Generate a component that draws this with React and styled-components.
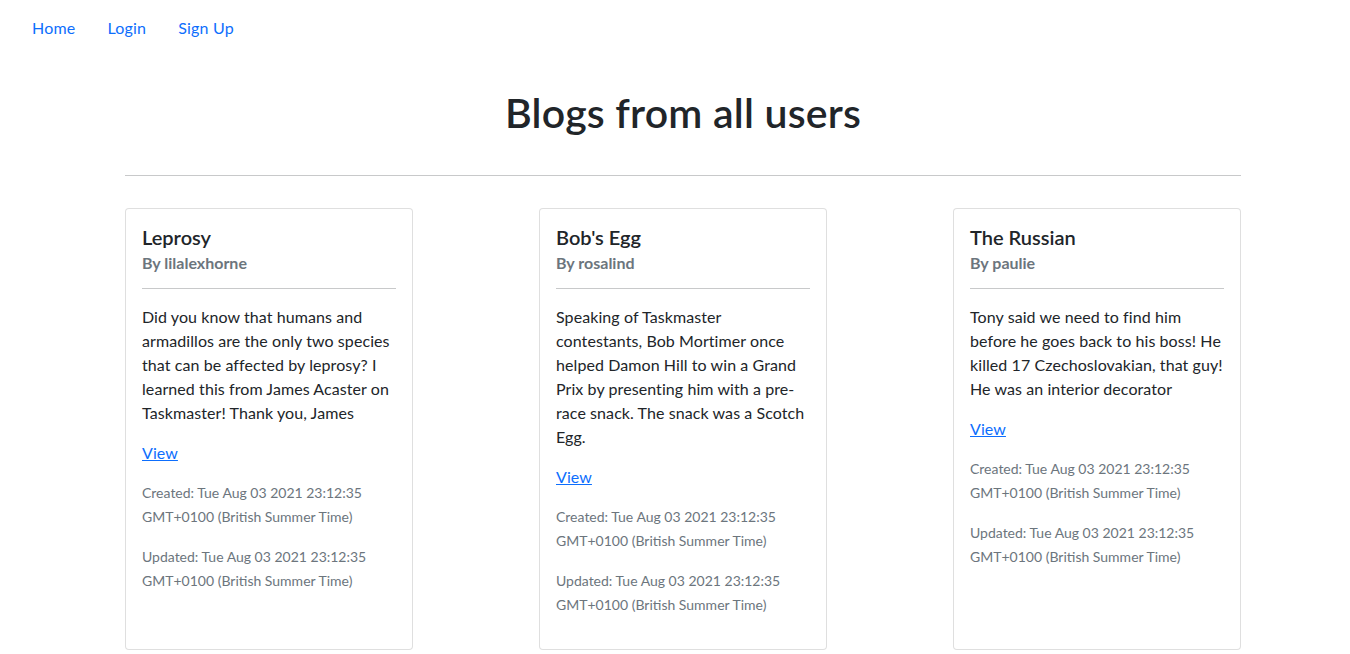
import React from "react";
import styled, { createGlobalStyle } from "styled-components";

const Global = createGlobalStyle`
  * { box-sizing: border-box; }
  body {
    margin: 0;
    font-family: Lato, "Noto Sans", sans-serif;
    font-size: 16px;
    line-height: 1.5;
    color: #212529;
    background: #fff;
  }
`;

const Nav = styled.nav`
  display: flex;
  padding: 8px 16px;
`;

const NavLink = styled.a`
  display: block;
  padding: 8px 16px;
  color: #0d6efd;
  text-decoration: none;
  font-size: 16px;
  line-height: 24px;
  letter-spacing: 0.2px;
  cursor: pointer;
`;

const Page = styled.div`
  padding-left: 16px;
`;

const Container = styled.main`
  width: 1140px;
  margin: 0 auto;
  padding: 0 12px;
`;

const Heading = styled.h1`
  margin: 33px 0 0;
  text-align: center;
  font-size: 41px;
  font-weight: 600;
  line-height: 48px;
  letter-spacing: 0.2px;
`;

const Rule = styled.hr`
  margin: ${(p) => p.$m || "16px 0"};
  border: 0;
  border-top: 1px solid #c8c9ca;
`;

const Grid = styled.div`
  display: flex;
  justify-content: space-between;
  align-items: stretch;
  margin-top: 32px;
`;

const Card = styled.article`
  width: 288px;
  border: 1px solid rgba(0, 0, 0, 0.125);
  border-radius: 4px;
  padding: 16px;
  background: #fff;
`;

const Title = styled.h5`
  margin: 0 0 8px;
  font-size: 20px;
  font-weight: 600;
  line-height: 24px;
`;

const Subtitle = styled.h6`
  margin: -4px 0 0;
  font-size: 16px;
  font-weight: 700;
  line-height: 19.2px;
  color: #6c757d;
`;

const Text = styled.p`
  margin: 0 0 16px;
  line-height: 24px;
  letter-spacing: 0.08px;
`;

const ViewLink = styled.a`
  color: #0d6efd;
  text-decoration: underline;
  cursor: pointer;
`;

const Meta = styled.p`
  margin: 0 0 16px;
  font-size: 14px;
  line-height: 24px;
  color: #6c757d;
`;

const date = "Tue Aug 03 2021 23:12:35 GMT+0100 (British Summer Time)";

const blogs = [
  {
    title: "Leprosy",
    author: "lilalexhorne",
    body: "Did you know that humans and armadillos are the only two species that can be affected by leprosy? I learned this from James Acaster on Taskmaster! Thank you, James",
  },
  {
    title: "Bob's Egg",
    author: "rosalind",
    body: "Speaking of Taskmaster contestants, Bob Mortimer once helped Damon Hill to win a Grand Prix by presenting him with a pre-race snack. The snack was a Scotch Egg.",
  },
  {
    title: "The Russian",
    author: "paulie",
    body: "Tony said we need to find him before he goes back to his boss! He killed 17 Czechoslovakian, that guy! He was an interior decorator",
  },
];

export default function App() {
  return (
    <>
      <Global />
      <Nav>
        <NavLink>Home</NavLink>
        <NavLink>Login</NavLink>
        <NavLink>Sign Up</NavLink>
      </Nav>
      <Page>
        <Container>
          <Heading>Blogs from all users</Heading>
          <Rule $m="38px 0 0" />
          <Grid>
            {blogs.map((b) => (
              <Card key={b.title}>
                <Title>{b.title}</Title>
                <Subtitle>By {b.author}</Subtitle>
                <Rule />
                <Text>{b.body}</Text>
                <Text>
                  <ViewLink>View</ViewLink>
                </Text>
                <Meta>Created: {date}</Meta>
                <Meta>Updated: {date}</Meta>
              </Card>
            ))}
          </Grid>
        </Container>
      </Page>
    </>
  );
}
